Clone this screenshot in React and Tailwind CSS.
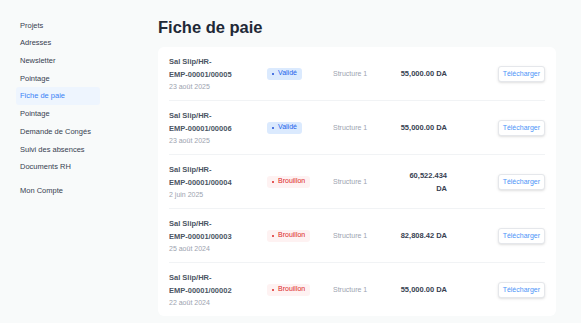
const navItems = [
  "Projets",
  "Adresses",
  "Newsletter",
  "Pointage",
  "Fiche de paie",
  "Pointage",
  "Demande de Congés",
  "Suivi des absences",
  "Documents RH",
];

const slips = [
  { id: "00005", date: "23 août 2025", status: "Validé", amount: "55,000.00 DA" },
  { id: "00006", date: "23 août 2025", status: "Validé", amount: "55,000.00 DA" },
  { id: "00004", date: "2 juin 2025", status: "Brouillon", amount: "60,522.434 DA" },
  { id: "00003", date: "25 août 2024", status: "Brouillon", amount: "82,808.42 DA" },
  { id: "00002", date: "22 août 2024", status: "Brouillon", amount: "55,000.00 DA" },
];

const StatusBadge = ({ status }) => {
  const valid = status === "Validé";
  return (
    <span
      className={
        valid
          ? "flex items-center gap-[4px] rounded-[3px] bg-[#dbeafe] px-[5px] h-[12px] text-[7px] text-[#2563eb]"
          : "flex items-center gap-[4px] rounded-[3px] bg-[#fef2f2] px-[5px] h-[12px] text-[7px] text-[#dc2626]"
      }
    >
      <span
        className={
          valid
            ? "w-[2px] h-[2px] rounded-full bg-[#1d4ed8]"
            : "w-[2px] h-[2px] rounded-full bg-[#dc2626]"
        }
      ></span>
      {status}
    </span>
  );
};

const App = () => {
  return (
    <div className="flex min-h-[323px] w-full bg-[#f8fafa] font-['Liberation_Sans',Arial,sans-serif]">
      <aside className="w-[158px] flex-none pt-[16.5px]">
        <nav className="flex flex-col">
          {navItems.map((item, i) => (
            <div
              key={i}
              className={
                item === "Fiche de paie"
                  ? "ml-[16px] w-[84px] h-[17.7px] flex items-center rounded-[3px] bg-[#eef5fe] px-[4px] text-[7.5px] text-[#3b82f6]"
                  : "ml-[16px] w-[84px] h-[17.7px] flex items-center px-[4px] text-[7.5px] text-[#374151]"
              }
            >
              {item}
            </div>
          ))}
          <div className="ml-[16px] w-[84px] mt-[6.3px] h-[17.7px] flex items-center px-[4px] text-[7.5px] text-[#374151]">
            Mon Compte
          </div>
        </nav>
      </aside>

      <main className="flex-1 pr-[25px] pt-[16px]">
        <h1 className="text-[16.5px] leading-[22px] font-bold text-[#1f2937] mb-[9px]">
          Fiche de paie
        </h1>

        <div className="rounded-[6px] bg-white">
          {slips.map((slip, i) => (
            <div
              key={slip.id}
              className={
                i < slips.length - 1
                  ? "mx-[11px] flex items-center py-[7.5px] border-b border-[#f1f3f5]"
                  : "mx-[11px] flex items-center py-[7.5px]"
              }
            >
              <div className="w-[98px] flex-none">
                <div className="text-[7.5px] leading-[13px] font-bold text-[#4b5563]">
                  Sal Slip/HR-
                  <br />
                  EMP-00001/{slip.id}
                </div>
                <div className="text-[7px] leading-[12px] text-[#9ca3af]">{slip.date}</div>
              </div>
              <div className="w-[66px] flex-none flex">
                <StatusBadge status={slip.status} />
              </div>
              <div className="w-[66px] flex-none text-[7px] leading-[12px] text-[#9ca3af]">Structure 1</div>
              <div className="w-[48px] flex-none text-right text-[7.5px] leading-[13px] font-bold text-[#374151]">
                {slip.amount}
              </div>
              <button className="ml-auto h-[16px] rounded-[3px] border border-[#e5e7eb] bg-white px-[4px] text-[7px] leading-[12px] text-[#4d94f7] shadow-sm">
                Télécharger
              </button>
            </div>
          ))}
        </div>
      </main>
    </div>
  );
};

export default App;
